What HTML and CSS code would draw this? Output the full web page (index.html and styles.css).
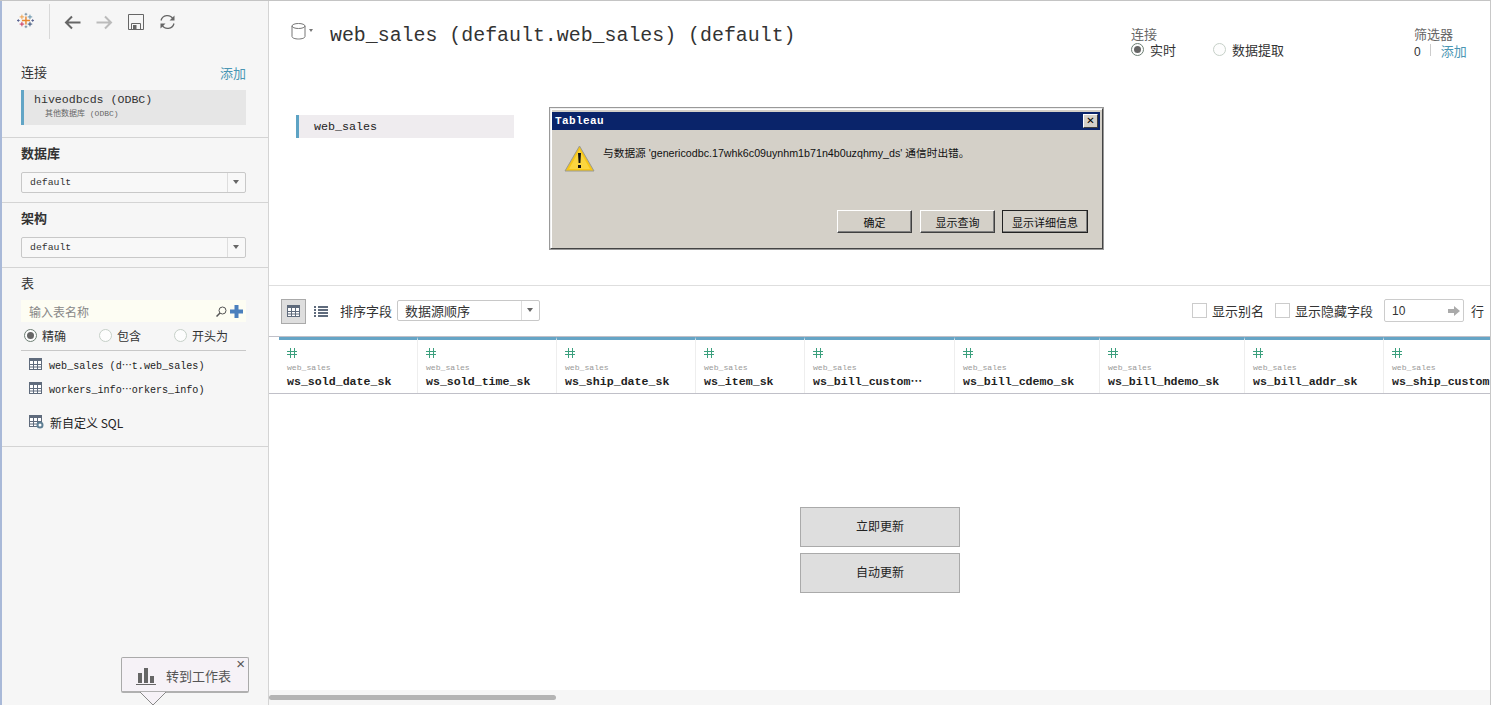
FILE: index.html
```html
<!DOCTYPE html>
<html lang="zh-CN">
<head>
  <meta charset="UTF-8" />
  <title>web_sales - Tableau</title>
  <link rel="stylesheet" href="styles.css">
</head>
<body>
  <svg class="defs" width="0" height="0">
    <symbol id="grid-icon" viewBox="0 0 13 12">
      <rect x="0.5" y="0.5" width="12" height="11" fill="#fff" stroke="#5f6b7c"/>
      <rect x="0" y="0" width="13" height="3" fill="#5f6b7c"/>
      <path d="M4.5 0v12M8.5 0v12M0 6.5h13M0 9h13" stroke="#5f6b7c" fill="none"/>
    </symbol>
    <symbol id="hash-icon" viewBox="0 0 10 10">
      <path d="M3.500 0v10M7.500 0v10M0 3.500h10M0 6.500h10" stroke="#3b9f7d" fill="none"/>
    </symbol>
  </svg>

  <aside class="sidebar">
    <div class="toolbar">
      <svg class="logo" width="17" height="17" viewBox="-1 0 19 18">
        <path d="M9 4.500v9M4.500 9h9" stroke="#e8862d" stroke-width="1.600"/>
        <path d="M4.500 2.500v5M2 5h5" stroke="#ee9a3e"/>
        <path d="M13.500 2.500v5M11 5h5" stroke="#5c8aa3"/>
        <path d="M4.500 10.500v5M2 13h5" stroke="#c7254e"/>
        <path d="M13.500 10.500v5M11 13h5" stroke="#27426f"/>
        <path d="M9 0.500v3M7.500 2h3M9 14.500v3M7.500 16h3" stroke="#6f8ba0"/>
        <path d="M0.500 7.500v3M-1 9h3M16.500 7.500v3M15 9h3" stroke="#55608f"/>
      </svg>
      <span class="toolbar-sep"></span>
      <svg class="tool" width="17" height="15" viewBox="0 0 17 15"><path d="M16.500 7.500H2M8 1.500l-6 6 6 6" fill="none" stroke="#666" stroke-width="2"/></svg>
      <svg class="tool" width="17" height="15" viewBox="0 0 17 15"><path d="M0.500 7.500H15M9 1.500l6 6-6 6" fill="none" stroke="#bbb" stroke-width="2"/></svg>
      <svg class="tool" width="16" height="16" viewBox="0 0 16 16"><path d="M0.500 0.500h15v15h-15zM3.500 15v-5.500h9v5.500" fill="none" stroke="#666"/><rect x="5" y="11" width="3.500" height="4" fill="#666"/></svg>
      <svg class="tool" width="17" height="16" viewBox="0 0 17 16"><path d="M2 6.500A6.500 6.500 0 0 1 14 5M15 9.500A6.500 6.500 0 0 1 3 11" fill="none" stroke="#666" stroke-width="1.300"/><path d="M15.500 1.500v5h-5zM1.500 14.500v-5h5z" fill="#666"/></svg>
    </div>

    <section class="side-section sec-conn">
      <div class="side-head">
        <span class="side-title">连接</span>
        <a class="link">添加</a>
      </div>
      <div class="conn-card">
        <div class="conn-name">hiveodbcds (ODBC)</div>
        <div class="conn-type">其他数据库 (ODBC)</div>
      </div>
    </section>

    <section class="side-section sec-select">
      <div class="side-title bold">数据库</div>
      <div class="select side-select"><span>default</span><i class="caret"></i></div>
    </section>

    <section class="side-section sec-select">
      <div class="side-title bold">架构</div>
      <div class="select side-select"><span>default</span><i class="caret"></i></div>
    </section>

    <section class="side-section sec-tables">
      <div class="side-title">表</div>
      <div class="search">
        <span class="search-text">输入表名称</span>
        <svg width="11" height="11" viewBox="0 0 11 11"><circle cx="6.500" cy="4.500" r="3.500" fill="none" stroke="#555"/><path d="M4 7l-3.500 3.500" stroke="#555" stroke-width="1.500"/></svg>
        <svg width="13" height="13" viewBox="0 0 13 13"><path d="M6.500 0v13M0 6.500h13" stroke="#4a7fbd" stroke-width="4"/></svg>
      </div>
      <div class="match-row">
        <label class="radio-item"><i class="radio on"></i>精确</label>
        <label class="radio-item"><i class="radio"></i>包含</label>
        <label class="radio-item"><i class="radio"></i>开头为</label>
      </div>
      <div class="table-row first"><svg width="13" height="12"><use href="#grid-icon"/></svg>web_sales (d⋯t.web_sales)</div>
      <div class="table-row"><svg width="13" height="12"><use href="#grid-icon"/></svg>workers_info⋯orkers_info)</div>
      <div class="table-row custom">
        <svg width="15" height="14" viewBox="0 0 15 14"><use href="#grid-icon" width="13" height="12"/><circle cx="11" cy="10" r="2.500" fill="#fff" stroke="#5f7f94" stroke-width="2"/></svg>
        <span>新自定义 SQL</span>
      </div>
    </section>

    <div class="sheet-tip">
      <svg width="20" height="18" viewBox="0 0 20 18"><path d="M2 6h4v10H2zM8 1h4v15H8zM14 9h4v7h-4z" fill="#666"/><path d="M0 17.500h20" stroke="#666"/></svg>
      <span>转到工作表</span>
      <b class="tip-close">×</b>
      <svg class="tip-arrow" width="28" height="13" viewBox="0 0 28 13"><path d="M1 0l13 13L27 0" fill="#f6f2f7" stroke="#888"/></svg>
    </div>
  </aside>

  <main class="main">
    <header class="top">
      <div class="title-row">
        <div class="title-wrap">
          <svg width="15" height="17" viewBox="0 0 15 17"><ellipse cx="7.500" cy="3" rx="6.500" ry="2.500" fill="none" stroke="#777"/><path d="M1 3v10.500c0 1.500 3 2.500 6.500 2.500s6.500-1 6.500-2.500V3" fill="none" stroke="#777"/></svg>
          <i class="mini-caret"></i>
          <h1>web_sales (default.web_sales) (default)</h1>
        </div>
        <div class="conn-mode">
          <div class="mode-label">连接</div>
          <div class="mode-row">
            <label class="radio-item"><i class="radio on"></i>实时</label>
            <label class="radio-item"><i class="radio"></i>数据提取</label>
          </div>
        </div>
        <div class="filter-box">
          <div class="mode-label">筛选器</div>
          <div class="filter-row"><span class="filter-count">0</span><span class="filter-sep"></span><a class="link">添加</a></div>
        </div>
      </div>
      <div class="table-pill">web_sales</div>
    </header>

    <div class="dialog">
      <div class="dialog-bar"><span>Tableau</span><b class="dialog-x">✕</b></div>
      <div class="dialog-body">
        <svg width="31" height="27" viewBox="0 0 31 27">
          <path d="M15.500 1L30 26H1z" fill="#f5c518" stroke="#9a9a90"/>
          <path d="M15.500 5L26 24H5z" fill="#fbd63f"/>
          <path d="M14 8h3l-.6 10h-1.800zM14 20h3v3h-3z" fill="#111"/>
        </svg>
        <p>与数据源 'genericodbc.17whk6c09uynhm1b71n4b0uzqhmy_ds' 通信时出错。</p>
      </div>
      <div class="dialog-btns">
        <button class="win-btn">确定</button>
        <button class="win-btn">显示查询</button>
        <button class="win-btn wide">显示详细信息</button>
      </div>
    </div>

    <div class="fields-bar">
      <span class="view-btn active"><svg width="13" height="12"><use href="#grid-icon"/></svg></span>
      <span class="view-btn">
        <svg width="14" height="11" viewBox="0 0 14 11"><path d="M0 1h2M4 1h10M0 4h2M4 4h10M0 7h2M4 7h10M0 10h2M4 10h10" stroke="#5f6b7c" stroke-width="2"/></svg>
      </span>
      <span class="sort-label">排序字段</span>
      <div class="select sort-select"><span>数据源顺序</span><i class="caret"></i></div>
      <label class="check first-check"><i></i>显示别名</label>
      <label class="check"><i></i>显示隐藏字段</label>
      <div class="rows-box"><span>10</span><svg width="12" height="10" viewBox="0 0 12 10"><path d="M0 3h6V0l6 5-6 5V7H0z" fill="#aaa"/></svg></div>
      <span class="rows-unit">行</span>
    </div>

    <div class="grid-head">
      <div class="col w139"><svg width="10" height="10"><use href="#hash-icon"/></svg><small>web_sales</small><b>ws_sold_date_sk</b></div>
      <div class="col w139"><svg width="10" height="10"><use href="#hash-icon"/></svg><small>web_sales</small><b>ws_sold_time_sk</b></div>
      <div class="col w139"><svg width="10" height="10"><use href="#hash-icon"/></svg><small>web_sales</small><b>ws_ship_date_sk</b></div>
      <div class="col w109"><svg width="10" height="10"><use href="#hash-icon"/></svg><small>web_sales</small><b>ws_item_sk</b></div>
      <div class="col w150"><svg width="10" height="10"><use href="#hash-icon"/></svg><small>web_sales</small><b>ws_bill_custom⋯</b></div>
      <div class="col w145"><svg width="10" height="10"><use href="#hash-icon"/></svg><small>web_sales</small><b>ws_bill_cdemo_sk</b></div>
      <div class="col w145"><svg width="10" height="10"><use href="#hash-icon"/></svg><small>web_sales</small><b>ws_bill_hdemo_sk</b></div>
      <div class="col w139"><svg width="10" height="10"><use href="#hash-icon"/></svg><small>web_sales</small><b>ws_bill_addr_sk</b></div>
      <div class="col last"><svg width="10" height="10"><use href="#hash-icon"/></svg><small>web_sales</small><b>ws_ship_custom</b></div>
    </div>

    <div class="grid-empty">
      <button class="update-btn">立即更新</button>
      <button class="update-btn">自动更新</button>
    </div>

    <div class="scrollbar"><span class="thumb"></span></div>
  </main>
</body>
</html>
```

FILE: styles.css
```css
* {
  box-sizing: border-box;
}

html, body {
  height: 100%;
}

body {
  margin: 0;
  display: flex;
  height: 100vh;
  overflow: hidden;
  background-color: #fff;
  color: #333;
  border-top: 1px solid #c4c4c4;
  border-right: 1px solid #c8c8c8;
  font-family: "Liberation Mono", "Noto Sans CJK SC", monospace;
  font-size: 12px;
}

.defs {
  position: absolute;
}

a.link {
  color: #4a96b4;
}

/* left column */
.sidebar {
  position: relative;
  width: 269px;
  flex: none;
  background-color: #f6f6f6;
  border-left: 2px solid #a9b9d8;
  border-right: 1px solid #d4d4d4;
}

.toolbar {
  display: flex;
  align-items: center;
  height: 40px;
  padding: 2px 0 0 15px;
}

.logo {
  margin-top: -3px;
}

.toolbar-sep {
  width: 1px;
  height: 35px;
  margin: -2px 14px 0 15px;
  background-color: #d8d8d8;
}

.tool {
  margin-right: 15px;
}

.side-section {
  padding: 0 22px 0 19px;
  border-bottom: 1px solid #d4d4d4;
}

.sec-conn {
  height: 97px;
  padding-top: 22px;
}

.sec-select {
  height: 65px;
  padding-top: 7px;
}

.sec-tables {
  height: 179px;
  padding-top: 7px;
}

.side-head {
  display: flex;
  justify-content: space-between;
  align-items: center;
  height: 18px;
}

.side-title {
  font-family: "Noto Sans CJK SC", sans-serif;
  font-size: 13px;
  line-height: 16px;
  color: #333;
}

.side-title.bold {
  font-weight: 700;
}

.link {
  font-family: "Noto Sans CJK SC", sans-serif;
  font-size: 13px;
}

.conn-card {
  height: 35px;
  margin-top: 9px;
  padding: 3px 0 0 10px;
  background-color: #e6e6e6;
  border-left: 3px solid #62a5c6;
}

.conn-name {
  font-size: 11.600px;
  line-height: 13px;
  color: #333;
}

.conn-type {
  margin: 2px 0 0 11px;
  font-size: 8px;
  line-height: 11px;
  color: #666;
}

.select {
  display: flex;
  align-items: center;
  background-color: #f8f8f8;
  border: 1px solid #c8c8c8;
  border-radius: 2px;
}

.select span {
  flex: 1;
}

.side-select {
  height: 21px;
  margin-top: 11px;
  padding-left: 8px;
  font-size: 9.800px;
  color: #333;
}

.caret {
  position: relative;
  width: 18px;
  height: 100%;
  border-left: 1px solid #ddd;
}

.caret::after {
  content: "";
  position: absolute;
  top: 7px;
  left: 5px;
  border-style: solid;
  border-width: 4px 3.500px 0;
  border-color: #666 transparent transparent;
}

.search {
  display: flex;
  align-items: center;
  gap: 3px;
  height: 22px;
  margin-top: 9px;
  padding: 0 3px 0 8px;
  background-color: #fdfdf3;
}

.search-text {
  flex: 1;
  font-family: "Noto Sans CJK SC", sans-serif;
  font-size: 12px;
  color: #888;
}

.match-row {
  display: flex;
  height: 29px;
  padding: 3px 0 0 3px;
  border-bottom: 1px solid #c8c8c8;
}

.match-row .radio-item {
  flex: none;
  width: 75px;
}

.radio-item {
  display: flex;
  align-items: center;
  gap: 5px;
  height: 20px;
  font-family: "Noto Sans CJK SC", sans-serif;
  font-size: 12px;
  color: #333;
}

.radio {
  position: relative;
  width: 13px;
  height: 13px;
  border-radius: 50%;
  background-color: #fdfdfd;
  border: 1px solid #c6d0c8;
}

.radio.on {
  border-color: #6d7f74;
}

.radio.on::after {
  content: "";
  position: absolute;
  top: 2px;
  left: 2px;
  width: 7px;
  height: 7px;
  border-radius: 50%;
  background-color: #666;
}

.table-row {
  display: flex;
  align-items: center;
  gap: 7px;
  height: 24px;
  padding-left: 8px;
  font-size: 10.100px;
  color: #222;
}

.table-row.first {
  margin-top: 1px;
}

.table-row.custom {
  margin-top: 10px;
  gap: 6px;
  font-family: "Noto Sans CJK SC", "Liberation Mono", sans-serif;
  font-size: 12px;
}

.sheet-tip {
  position: absolute;
  left: 119px;
  top: 656px;
  display: flex;
  align-items: center;
  gap: 10px;
  width: 128px;
  height: 36px;
  padding: 2px 0 0 14px;
  background-color: #f6f2f7;
  border: 1px solid #aaa;
  border-bottom: 2px solid #b0b0b0;
  border-radius: 2px;
  font-family: "Noto Sans CJK SC", sans-serif;
  font-size: 13px;
  color: #555;
}

.tip-arrow {
  position: absolute;
  left: 17px;
  top: 34px;
}

.tip-close {
  position: absolute;
  top: -3px;
  right: 3px;
  font-family: "Liberation Sans", sans-serif;
  font-weight: 400;
  font-size: 15px;
  color: #555;
}

/* right column */
.main {
  position: relative;
  flex: 1;
  min-width: 0;
  display: flex;
  flex-direction: column;
}

.top {
  height: 285px;
  padding: 19px 0 0 22px;
  border-bottom: 1px solid #dedede;
}

.title-row {
  display: flex;
}

.title-wrap {
  flex: 1;
  display: flex;
  align-items: flex-start;
  padding-top: 3px;
}

.mini-caret {
  margin: 6px 0 0 3px;
  border-style: solid;
  border-width: 3px 2.500px 0;
  border-color: #777 transparent transparent;
}

h1 {
  margin: -1px 0 0 17px;
  font-size: 19.900px;
  line-height: 27px;
  font-weight: 400;
  color: #333;
}

.conn-mode {
  width: 283px;
  padding-top: 7px;
}

.filter-box {
  width: 76px;
  padding-top: 7px;
}

.mode-label {
  font-family: "Noto Sans CJK SC", sans-serif;
  font-size: 13px;
  line-height: 14px;
  color: #666;
}

.mode-row {
  display: flex;
  margin-top: -2px;
}

.mode-row .radio-item {
  width: 82px;
  gap: 6px;
  font-size: 13px;
}

.filter-row {
  display: flex;
  align-items: center;
  height: 20px;
  margin-top: -1px;
  font-family: "Liberation Sans", sans-serif;
  font-size: 12px;
}

.filter-count {
  margin-top: 3px;
}

.filter-sep {
  width: 1px;
  height: 12px;
  margin: 0 10px 0 9px;
  background-color: #ccc;
}

.table-pill {
  width: 218px;
  height: 23px;
  margin: 55px 0 0 5px;
  padding-left: 15px;
  line-height: 24px;
  font-size: 11.700px;
  background-color: #efecef;
  border-left: 3px solid #5da3c4;
  color: #222;
}

.dialog {
  position: absolute;
  left: 281px;
  top: 107px;
  width: 553px;
  height: 141px;
  padding: 3px 2px 3px 1px;
  background-color: #d4d0c8;
  border: 1px solid #eeeeee;
  border-right-color: #444;
  border-bottom-color: #444;
  box-shadow: inset 1px 1px 0 #fff, 0 0 0 1px #999;
}

.dialog-bar {
  display: flex;
  justify-content: space-between;
  align-items: center;
  height: 18px;
  padding: 0 2px 0 3px;
  background-color: #0a246a;
  color: #fff;
  font-weight: 700;
  font-size: 11px;
  letter-spacing: .400px;
}

.dialog-x {
  width: 15px;
  height: 14px;
  line-height: 12px;
  text-align: center;
  font-family: "DejaVu Sans", sans-serif;
  font-size: 10px;
  letter-spacing: 0;
  color: #000;
  background-color: #d4d0c8;
  border: 1px solid #fff;
  border-right-color: #404040;
  border-bottom-color: #404040;
}

.dialog-body {
  display: flex;
  align-items: flex-start;
  height: 80px;
  padding: 15px 0 0 12px;
  color: #111;
}

.dialog-body p {
  margin: 1px 0 0 8px;
  font-family: "Liberation Sans", "Noto Sans CJK SC", sans-serif;
  font-size: 10.700px;
  line-height: 14px;
}

.dialog-btns {
  display: flex;
  justify-content: flex-end;
  gap: 8px;
  padding-right: 12px;
}

.win-btn {
  width: 75px;
  height: 23px;
  padding: 0;
  background-color: #d4d0c8;
  border: 1px solid #fff;
  border-right-color: #404040;
  border-bottom-color: #404040;
  box-shadow: inset -1px -1px 0 #808080;
  font-family: "Noto Sans CJK SC", sans-serif;
  font-size: 11px;
  color: #111;
}

.win-btn.wide {
  width: 86px;
  margin-left: -1px;
  outline: 1px solid #222;
  outline-offset: -1px;
}

.fields-bar {
  display: flex;
  align-items: center;
  height: 50px;
  padding: 0 6px 0 12px;
  font-family: "Noto Sans CJK SC", sans-serif;
  font-size: 13px;
  color: #333;
}

.view-btn {
  display: flex;
  align-items: center;
  justify-content: center;
  width: 25px;
  height: 25px;
  margin-right: 2px;
  border: 1px solid transparent;
}

.view-btn.active {
  background-color: #dedede;
  border-color: #aaa;
}

.sort-label {
  margin: 0 5px 2px 5px;
}

.sort-select {
  width: 143px;
  height: 21px;
  margin-bottom: 1px;
  padding-left: 7px;
  background-color: #fff;
}

.sort-select span {
  margin-bottom: 1px;
}

.check {
  display: flex;
  align-items: center;
  gap: 5px;
  margin: 0 11px 2px 0;
}

.first-check {
  margin-left: auto;
}

.check i {
  width: 15px;
  height: 15px;
  margin-bottom: -1px;
  background-color: #fff;
  border: 1px solid #ccc;
}

.rows-box {
  display: flex;
  align-items: center;
  justify-content: space-between;
  width: 80px;
  height: 23px;
  margin-bottom: 1px;
  padding: 0 3px 0 7px;
  border: 1px solid #ccc;
  border-radius: 2px;
  font-family: "Liberation Sans", sans-serif;
  font-size: 12px;
}

.rows-unit {
  margin: 0 0 2px 7px;
}

.grid-head {
  display: flex;
  height: 58px;
  padding-left: 10px;
  overflow: hidden;
  border-top: 1px solid #c0c0c8;
  border-bottom: 1px solid #c0c0c8;
}

.col {
  flex: none;
  display: flex;
  flex-direction: column;
  padding: 8px 0 0 8px;
  border-top: 3px solid #66a5c6;
  border-right: 1px solid #eee;
  white-space: nowrap;
  overflow: hidden;
}

.w109 { width: 109px; }
.w139 { width: 139px; }
.w145 { width: 145px; }
.w150 { width: 150px; }

.col.last {
  flex: 1;
  border-right: none;
}

.col small {
  margin-top: 5px;
  font-size: 8.100px;
  line-height: 9px;
  color: #999;
}

.col b {
  margin-top: 3px;
  font-size: 11.600px;
  line-height: 13px;
  color: #222;
}

.grid-empty {
  flex: 1;
  display: flex;
  flex-direction: column;
  align-items: center;
  gap: 6px;
  padding: 113px 0 0 1px;
}

.update-btn {
  width: 160px;
  height: 40px;
  padding: 0 0 4px;
  background-color: #dedede;
  border: 1px solid #aaa;
  font-family: "Noto Sans CJK SC", sans-serif;
  font-size: 12px;
  color: #222;
}

.scrollbar {
  height: 15px;
  padding-top: 5px;
  background-color: #f6f6f6;
}

.thumb {
  display: block;
  width: 287px;
  height: 5px;
  border-radius: 3px;
  background-color: #b4b4b4;
}
```
